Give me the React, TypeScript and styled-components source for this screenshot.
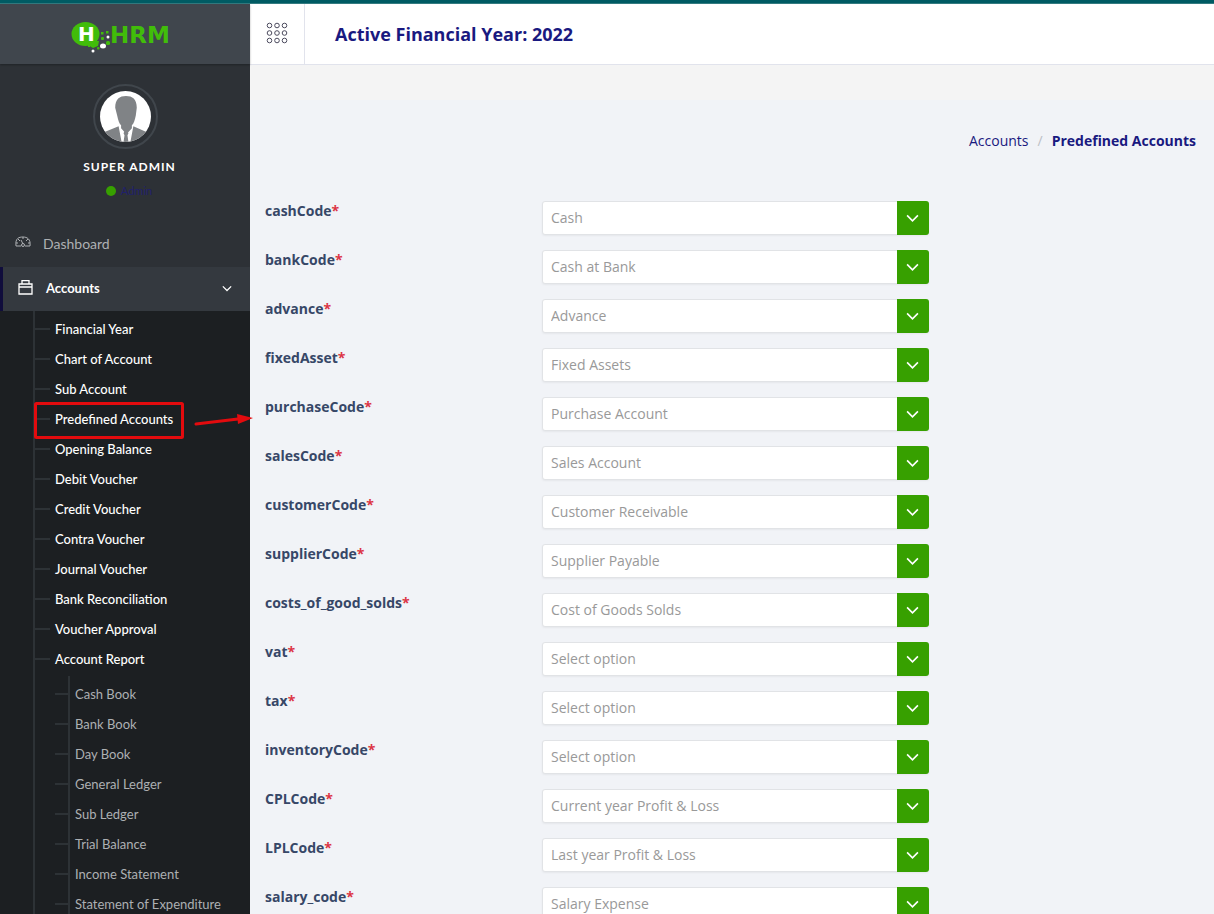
import React, { Fragment } from "react";
import styled, { createGlobalStyle } from "styled-components";

const GlobalStyle = createGlobalStyle`
  * { box-sizing: border-box; }
  body {
    margin: 0;
    background: #f1f3f7;
    font-family: "Open Sans", sans-serif;
    font-size: 14px;
    color: #374767;
  }
  a { color: inherit; text-decoration: none; }
  ul, ol { margin: 0; padding: 0; list-style: none; }
`;

const green = "#37a000";
const navy = "#191980";
const line = "#2d3236";

const Shell = styled.div`
  display: flex;
  flex-direction: column;
  height: 100vh;
  overflow: hidden;
`;

const Accent = styled.div`
  flex: none;
  height: 4px;
  background: #005b63;
  border-bottom: 1px solid #347b80;
`;

const Body = styled.div`
  flex: 1;
  display: flex;
  min-height: 0;
`;

const Sidebar = styled.aside`
  position: relative;
  z-index: 1;
  flex: none;
  width: 250px;
  background: #2d3136;
  font-family: Lato, sans-serif;
  color: #fff;
`;

const Brand = styled.a`
  display: flex;
  justify-content: center;
  align-items: center;
  height: 60px;
  padding: 6px 8px 0 0;
  background: #40464d;
  box-shadow: 0 1px 2px rgba(0, 0, 0, 0.3);
`;

const Profile = styled.div`
  display: flex;
  flex-direction: column;
  align-items: center;
  height: 158px;
  padding-top: 20px;
`;

const Avatar = styled.div`
  width: 65px;
  height: 65px;
  padding: 5px;
  border: 2px solid #40464c;
  border-radius: 50%;

  svg {
    display: block;
    width: 100%;
    height: 100%;
  }
`;

const UserName = styled.div`
  padding: 8px 0 0 9px;
  font-size: 12px;
  line-height: 20px;
  font-weight: 700;
  letter-spacing: 1px;
`;

const Status = styled.div`
  display: flex;
  align-items: center;
  gap: 5px;
  padding: 4px 0 0 8px;
  font-size: 11px;
  line-height: 20px;
  color: #20206c;

  &::before {
    content: "";
    width: 10px;
    height: 10px;
    border-radius: 50%;
    background: ${green};
  }
`;

const MenuLink = styled.a<{ $active?: boolean }>`
  display: flex;
  align-items: center;
  gap: 12px;
  height: 44px;
  padding: 0 18px 2px 15px;
  font-size: ${(p) => (p.$active ? "13px" : "14px")};
  font-weight: ${(p) => (p.$active ? 700 : 400)};
  color: ${(p) => (p.$active ? "#fff" : "#adb0b3")};
  background: ${(p) => (p.$active ? "#34393f" : "transparent")};
  border-left: ${(p) => (p.$active ? "3px solid #100d3c" : "0")};

  & + & { margin-top: 1px; }
  span { flex: 1; }
  svg { flex: none; }
`;

const SubMenu = styled.ul`
  padding: 3px 0 0 34px;
  height: 700px;
  background: linear-gradient(${line}, ${line}) 33px 0 / 2px 100% no-repeat #1c1f22;
`;

const SubItem = styled.li`
  position: relative;
`;

const SubLink = styled.a`
  display: flex;
  align-items: center;
  gap: 5px;
  height: 30px;
  font-size: 13px;
  font-weight: 500;
  white-space: nowrap;

  &::before {
    content: "";
    width: 16px;
    height: 2px;
    background: ${line};
  }
`;

const ReportMenu = styled.ul`
  margin: 2px 0 0 21px;
  padding-top: 3px;
  background: linear-gradient(${line}, ${line}) 13px 0 / 2px 100% no-repeat;

  ${SubLink} {
    color: #adb0b3;
    font-weight: 400;
  }
  ${SubLink}::before { width: 15px; }
`;

const Marker = styled.svg`
  position: absolute;
  top: -2px;
  left: 0;
  pointer-events: none;
`;

const Content = styled.div`
  flex: 1;
  min-width: 0;
  display: flex;
  flex-direction: column;
`;

const TopBar = styled.header`
  display: flex;
  flex: none;
  height: 61px;
  background: #fff;
  border-bottom: 1px solid #e1e3ec;
`;

const MenuButton = styled.button`
  display: flex;
  justify-content: center;
  align-items: center;
  width: 55px;
  padding: 0 0 2px;
  background: none;
  border: 0;
  border-right: 1px solid #e1e3ec;
`;

const YearTitle = styled.h1`
  margin: 0;
  padding-left: 30px;
  font-size: 18px;
  line-height: 60px;
  font-weight: 700;
  color: ${navy};
`;

const Strip = styled.div`
  flex: none;
  height: 35px;
  background: #f4f4f4;
`;

const Main = styled.main`
  flex: 1;
  padding: 30px 15px 0;
  background: #f1f3f7;
`;

const Crumbs = styled.ol`
  display: flex;
  justify-content: flex-end;
  gap: 9px;
  padding-right: 3px;
  margin-bottom: 50px;
  line-height: 21px;
  color: ${navy};
`;

const CrumbItem = styled.li<{ $current?: boolean; $muted?: boolean }>`
  font-weight: ${(p) => (p.$current ? 700 : 400)};
  color: ${(p) => (p.$muted ? "#bcbfc6" : "inherit")};
`;

const Form = styled.form`
  display: grid;
  grid-template-columns: 277fr 387fr 270fr;
  row-gap: 15px;
`;

const Label = styled.label`
  grid-column: 1;
  line-height: 20px;
  font-weight: 700;
`;

const Required = styled.span`
  color: #dc3545;
`;

const Field = styled.div`
  position: relative;
  grid-column: 2;
`;

const Select = styled.select`
  appearance: none;
  display: block;
  width: 100%;
  height: 34px;
  padding: 0 40px 2px 8px;
  border: 1px solid #e1e3e6;
  border-radius: 3px;
  background: #fff;
  box-shadow: 0 1px 2px rgba(0, 0, 0, 0.05);
  font: inherit;
  color: #999;
`;

const Arrow = styled.span`
  position: absolute;
  inset: 0 0 0 auto;
  display: flex;
  justify-content: center;
  align-items: center;
  width: 32px;
  padding: 0 2px 1px 0;
  border-radius: 0 3px 3px 0;
  background: ${green};
  pointer-events: none;
`;

const Logo = () => (
  <svg width="100" height="34" viewBox="0 0 100 34" aria-label="HRM">
    <ellipse cx="14.5" cy="14" rx="14" ry="12" fill="#41bd0a" />
    <path d="M17 25l2-4h9l-1 5-5 2z" fill="#41bd0a" />
    <text x="7" y="21" fontFamily="DejaVu Sans, sans-serif" fontWeight="700" fontSize="20" fill="#fff">H</text>
    <g fill="#41bd0a">
      <rect x="17" y="25" width="2" height="2" />
      <rect x="26" y="27" width="2.500" height="2.500" rx="1" />
      <rect x="30" y="17" width="3" height="3" rx="1" />
      <rect x="30" y="12" width="2.500" height="2.500" />
      <rect x="35" y="11" width="2.500" height="2.500" />
      <rect x="35" y="21" width="4" height="4" rx="1.500" />
    </g>
    <ellipse cx="32" cy="26" rx="3" ry="2.5" fill="#fff" />
    <circle cx="22" cy="31" r="1.5" fill="#fff" />
    <circle cx="37" cy="17" r="1.5" fill="#fff" />
    <text x="39" y="23" fontFamily="DejaVu Sans, sans-serif" fontWeight="700" fontSize="23" fill="#41bd0a">HRM</text>
  </svg>
);

const Person = () => (
  <svg viewBox="0 0 52 52">
    <defs>
      <clipPath id="face"><circle cx="26" cy="26" r="26" /></clipPath>
    </defs>
    <g clipPath="url(#face)">
      <rect width="52" height="52" fill="#fff" />
      <path d="M15.500 17C15.500 8 20 5 26.500 5S37.500 8 37.500 17l-1 8c-1 5-2 8-4 10v3l-5.500 6-5.500-6v-3c-2-2-3-5-4-10z" fill="#808386" />
      <path d="M19 36L4 42v10h18zM34 36l14 6v10H31z" fill="#808386" />
      <path d="M25 41h3l1 2-1 2 1 7h-5l1-7-1-2z" fill="#808386" />
    </g>
  </svg>
);

const DashIcon = () => (
  <svg width="16" height="16" viewBox="0 0 16 16" fill="none" stroke="currentColor">
    <path d="M6 11H1C0 3 4 2 8 2s8 2 7 9h-5M8 2v2M3 4l2 2M13 4l-2 2M1 8h2M13 8h2M6 5l2 4" />
    <circle cx="8" cy="10" r="1.5" />
  </svg>
);

const BagIcon = () => (
  <svg width="16" height="16" viewBox="0 0 16 16" fill="none" stroke="currentColor" strokeWidth="1.3">
    <path d="M1 4h13v10H1zM1 7h13M4 4V0.7h7V4" />
  </svg>
);

const GridIcon = () => (
  <svg width="22" height="22" viewBox="0 0 22 22" fill="none" stroke="#4c4b5e">
    {[3.5, 11, 18.5].map((y) =>
      [3.5, 11, 18.5].map((x) => <circle key={`${x}-${y}`} cx={x} cy={y} r="2.3" />),
    )}
  </svg>
);

const Chevron = ({ size }: { size: number }) => (
  <svg width={size} height={size} viewBox="0 0 12 12" fill="none" stroke="#fff" strokeWidth="1.5">
    <path d="M1 4l5 5 5-5" />
  </svg>
);

const accountLinks = [
  "Financial Year", "Chart of Account", "Sub Account", "Predefined Accounts",
  "Opening Balance", "Debit Voucher", "Credit Voucher", "Contra Voucher",
  "Journal Voucher", "Bank Reconciliation", "Voucher Approval", "Account Report",
];

const reportLinks = [
  "Cash Book", "Bank Book", "Day Book", "General Ledger", "Sub Ledger",
  "Trial Balance", "Income Statement", "Statement of Expenditure",
];

const fields: [string, string][] = [
  ["cashCode", "Cash"],
  ["bankCode", "Cash at Bank"],
  ["advance", "Advance"],
  ["fixedAsset", "Fixed Assets"],
  ["purchaseCode", "Purchase Account"],
  ["salesCode", "Sales Account"],
  ["customerCode", "Customer Receivable"],
  ["supplierCode", "Supplier Payable"],
  ["costs_of_good_solds", "Cost of Goods Solds"],
  ["vat", "Select option"],
  ["tax", "Select option"],
  ["inventoryCode", "Select option"],
  ["CPLCode", "Current year Profit & Loss"],
  ["LPLCode", "Last year Profit & Loss"],
  ["salary_code", "Salary Expense"],
];

export default function App() {
  return (
    <Shell>
      <GlobalStyle />
      <Accent />
      <Body>
        <Sidebar>
          <Brand href="#"><Logo /></Brand>
          <Profile>
            <Avatar><Person /></Avatar>
            <UserName>SUPER ADMIN</UserName>
            <Status>Admin</Status>
          </Profile>
          <nav>
            <MenuLink href="#"><DashIcon /><span>Dashboard</span></MenuLink>
            <MenuLink href="#" $active><BagIcon /><span>Accounts</span><Chevron size={10} /></MenuLink>
            <SubMenu>
              {accountLinks.map((name) => (
                <SubItem key={name}>
                  <SubLink href="#">{name}</SubLink>
                  {name === "Predefined Accounts" && (
                    <Marker width="220" height="38" viewBox="0 0 220 38">
                      <rect x="1.5" y="1.5" width="147" height="34" rx="1" fill="none" stroke="#e30b0e" strokeWidth="3" />
                      <path d="M162 22l42-5" stroke="#e30b0e" strokeWidth="3" strokeLinecap="round" />
                      <path d="M203 12l16 4-15 6z" fill="#e30b0e" />
                    </Marker>
                  )}
                </SubItem>
              ))}
              <li>
                <ReportMenu>
                  {reportLinks.map((name) => (
                    <SubItem key={name}><SubLink href="#">{name}</SubLink></SubItem>
                  ))}
                </ReportMenu>
              </li>
            </SubMenu>
          </nav>
        </Sidebar>
        <Content>
          <TopBar>
            <MenuButton type="button" aria-label="Toggle menu"><GridIcon /></MenuButton>
            <YearTitle>Active Financial Year: 2022</YearTitle>
          </TopBar>
          <Strip />
          <Main>
            <Crumbs>
              <CrumbItem><a href="#">Accounts</a></CrumbItem>
              <CrumbItem $muted>/</CrumbItem>
              <CrumbItem $current>Predefined Accounts</CrumbItem>
            </Crumbs>
            <Form>
              {fields.map(([name, value]) => (
                <Fragment key={name}>
                  <Label htmlFor={name}>{name}<Required>*</Required></Label>
                  <Field>
                    <Select id={name} defaultValue={value}>
                      <option>{value}</option>
                    </Select>
                    <Arrow><Chevron size={13} /></Arrow>
                  </Field>
                </Fragment>
              ))}
            </Form>
          </Main>
        </Content>
      </Body>
    </Shell>
  );
}
